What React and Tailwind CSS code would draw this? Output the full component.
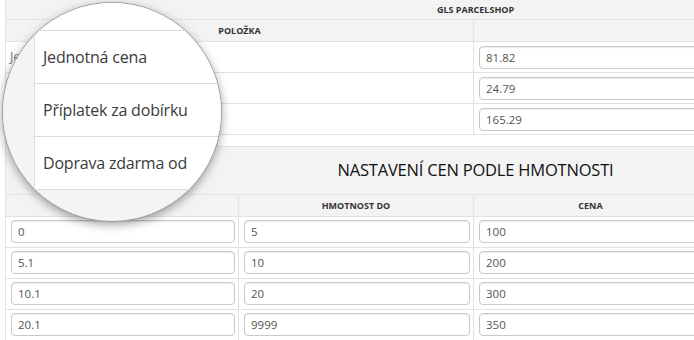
const topRows = [
  { label: "Jednotná cena", value: "81.82" },
  { label: "Příplatek za dobírku", value: "24.79" },
  { label: "Doprava zdarma od", value: "165.29" },
];

const weightRows = [
  ["0", "5", "100"],
  ["5.1", "10", "200"],
  ["10.1", "20", "300"],
  ["20.1", "9999", "350"],
];

const Field = ({ value, className = "" }) => (
  <div
    className={`h-[23px] flex items-center pl-[6px] text-[11.5px] text-[#555] bg-white border border-[#c9c9c9] rounded-[4px] shadow-[inset_0_1px_1px_rgba(0,0,0,0.08)] ${className}`}
  >
    {value}
  </div>
);

const Magnifier = () => (
  <div className="absolute left-[2px] top-[2px] w-[220px] h-[220px] rounded-full overflow-hidden border border-[#9a9a9a] bg-[#f4f4f4] shadow-[0_3px_10px_rgba(0,0,0,0.35)]">
    <div className="absolute -left-[3px] -top-[3px] w-[240px] flex">
      <div className="w-[34px] h-[189px] bg-[#f4f4f4]" />
      <div className="flex-1 border-l border-[#dcdcdc] bg-white">
        <div className="h-[31px] border-b border-[#dcdcdc]" />
        {topRows.map((r) => (
          <div
            key={r.label}
            className="h-[53px] border-b border-[#dcdcdc] flex items-center pl-[8px] text-[16px] tracking-[-0.2px] text-[#3b3b3b]"
          >
            {r.label}
          </div>
        ))}
      </div>
    </div>
  </div>
);

export default function App() {
  return (
    <div className="relative w-[694px] h-[340px] overflow-hidden bg-white font-['Open_Sans',sans-serif] text-[#333]">
      <div className="ml-[5px] w-[940px] border-l border-[#e2e2e2]">
        <div className="h-[20px] bg-[#f3f3f3] border-b border-[#e2e2e2] flex items-center justify-center text-[9px] font-bold">
          GLS PARCELSHOP
        </div>
        <div className="h-[22px] bg-[#f3f3f3] border-b border-[#e2e2e2] grid grid-cols-[468px_1fr] text-[9px] font-bold">
          <div className="border-r border-[#e2e2e2] flex items-center justify-center">POLOŽKA</div>
          <div />
        </div>
        {topRows.map((r) => (
          <div key={r.label} className="h-[31px] border-b border-[#e2e2e2] grid grid-cols-[468px_1fr]">
            <div className="border-r border-[#e2e2e2] flex items-center pl-[4px] text-[12px] text-[#777]">{r.label}</div>
            <div className="pl-[5px] pt-[4px]">
              <Field value={r.value} className="w-[440px]" />
            </div>
          </div>
        ))}
        <div className="h-[12px] border-b border-[#e2e2e2]" />
        <div className="h-[48px] bg-[#f3f3f3] border-b border-[#e2e2e2] flex items-center justify-center text-[16.5px] tracking-[-0.2px] text-[#111]">
          NASTAVENÍ CEN PODLE HMOTNOSTI
        </div>
        <div className="h-[22px] bg-[#f3f3f3] border-b border-[#e2e2e2] grid grid-cols-[233px_235px_234px_1fr] text-[9px] font-bold">
          <div className="border-r border-[#e2e2e2]" />
          <div className="border-r border-[#e2e2e2] flex items-center justify-center">HMOTNOST DO</div>
          <div className="border-r border-[#e2e2e2] flex items-center justify-center">CENA</div>
          <div />
        </div>
        {weightRows.map((row, i) => (
          <div key={i} className="h-[31px] border-b border-[#e2e2e2] grid grid-cols-[233px_235px_234px_1fr]">
            <div className="border-r border-[#e2e2e2] pl-[5px] pt-[3px]">
              <Field value={row[0]} className="w-[224px]" />
            </div>
            <div className="border-r border-[#e2e2e2] pl-[5px] pt-[3px]">
              <Field value={row[1]} className="w-[226px]" />
            </div>
            <div className="border-r border-[#e2e2e2] pl-[5px] pt-[3px]">
              <Field value={row[2]} className="w-[224px]" />
            </div>
            <div />
          </div>
        ))}
      </div>
      <Magnifier />
    </div>
  );
}
